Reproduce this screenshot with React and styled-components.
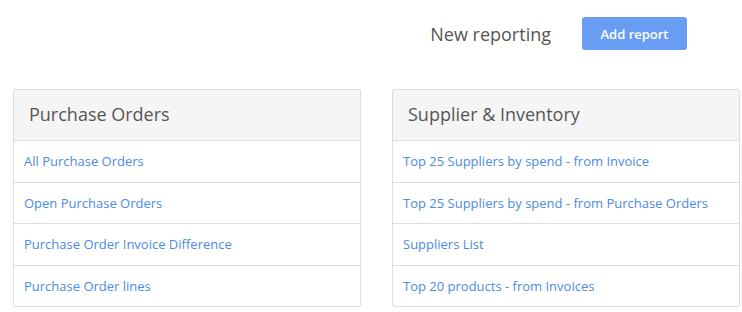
import React from 'react';
import styled, { createGlobalStyle } from 'styled-components';

const GlobalStyle = createGlobalStyle`
  body {
    margin: 0;
    background: #ffffff;
    font-family: "Open Sans", "Liberation Sans", sans-serif;
  }
`;

const Page = styled.div`
  width: 742px;
  padding: 17px 0 0 13px;
  box-sizing: border-box;
`;

const TopBar = styled.div`
  display: flex;
  justify-content: flex-end;
  align-items: center;
  gap: 31px;
  padding-right: 55px;
  height: 33px;
`;

const Title = styled.span`
  font-size: 18px;
  color: #555555;
`;

const Button = styled.button`
  width: 105px;
  height: 33px;
  background: #699cf3;
  color: #ffffff;
  border: none;
  border-radius: 3px;
  font-family: "Open Sans", "Liberation Sans", sans-serif;
  font-size: 13px;
  font-weight: 600;
`;

const Columns = styled.div`
  display: flex;
  gap: 31px;
  margin-top: 39px;
`;

const Panel = styled.div`
  width: ${props => props.width}px;
  border: 1px solid #dddddd;
  border-radius: 2px;
  box-sizing: border-box;
`;

const PanelHeader = styled.div`
  height: 51px;
  display: flex;
  align-items: center;
  padding: 0 0 2px 15px;
  box-sizing: border-box;
  background: #f5f5f5;
  border-bottom: 1px solid #dddddd;
  font-size: 18px;
  color: #555555;
`;

const Row = styled.a`
  display: flex;
  align-items: center;
  height: 40.5px;
  padding-left: 10px;
  border-top: 1px solid #dddddd;
  font-size: 13px;
  color: #4d8ae4;
  text-decoration: none;
  &:first-of-type {
    border-top: none;
  }
`;

const panels = [
  {
    title: 'Purchase Orders',
    width: 348,
    links: [
      'All Purchase Orders',
      'Open Purchase Orders',
      'Purchase Order Invoice Difference',
      'Purchase Order lines',
    ],
  },
  {
    title: 'Supplier & Inventory',
    width: 348,
    links: [
      'Top 25 Suppliers by spend - from Invoice',
      'Top 25 Suppliers by spend - from Purchase Orders',
      'Suppliers List',
      'Top 20 products - from Invoices',
    ],
  },
];

export default function App() {
  return (
    <Page>
      <GlobalStyle />
      <TopBar>
        <Title>New reporting</Title>
        <Button>Add report</Button>
      </TopBar>
      <Columns>
        {panels.map(panel => (
          <Panel key={panel.title} width={panel.width}>
            <PanelHeader>{panel.title}</PanelHeader>
            {panel.links.map(link => (
              <Row key={link} href="#">{link}</Row>
            ))}
          </Panel>
        ))}
      </Columns>
    </Page>
  );
}
